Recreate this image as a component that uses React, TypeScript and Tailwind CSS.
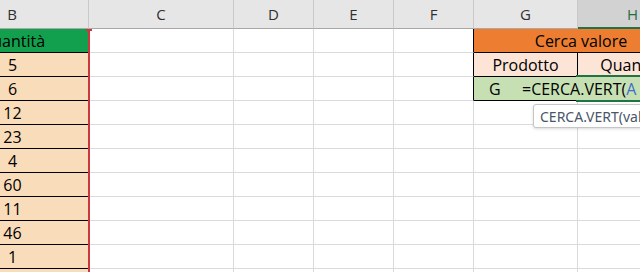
import React from 'react';

const qty = ['5', '6', '12', '23', '4', '60', '11', '46', '1', ''];

// empty grid cell
function Empty({ w }: { w: string }) {
  return <div className={`${w} shrink-0 border-r border-b border-[#dadada]`} />;
}

function HeadCell({ w, label, active }: { w: string; label: string; active?: boolean }) {
  return (
    <div
      className={`${w} shrink-0 flex items-center justify-center border-r border-[#c9c9c9] ${
        active
          ? 'bg-[#d2d2d2] text-[#1e6e42] border-b-2 border-b-[#217346]'
          : 'bg-[#e6e6e6] text-[#303030] border-b border-b-[#a8a8a8]'
      }`}
    >
      <span className="text-[15px] leading-none pt-[1px]">{label}</span>
    </div>
  );
}

export default function App() {
  return (
    <div className="relative w-[640px] h-[272px] overflow-hidden bg-white font-['Open_Sans',sans-serif] text-[16px] text-black">
      <div className="-ml-[64px] flex flex-col w-[752px]">
        {/* column headers */}
        <div className="flex h-[29px]">
          <HeadCell w="w-[153px]" label="B" />
          <HeadCell w="w-[145px]" label="C" />
          <HeadCell w="w-[80px]" label="D" />
          <HeadCell w="w-[80px]" label="E" />
          <HeadCell w="w-[80px]" label="F" />
          <HeadCell w="w-[104px]" label="G" />
          <HeadCell w="w-[110px]" label="H" active />
        </div>

        {/* row 1 */}
        <div className="flex h-[24px]">
          <div className="w-[153px] shrink-0 bg-[#12a04e] border-b border-black flex items-center justify-center">
            <span>Quantità</span>
          </div>
          <Empty w="w-[145px]" />
          <Empty w="w-[80px]" />
          <Empty w="w-[80px]" />
          <div className="w-[80px] shrink-0 border-r border-black border-b border-b-[#dadada]" />
          <div className="w-[214px] shrink-0 bg-[#ed7d31] border-b border-black flex items-center justify-center">
            <span>Cerca valore</span>
          </div>
        </div>

        {/* row 2 */}
        <div className="flex h-[24px]">
          <div className="w-[153px] shrink-0 bg-[#f9dcb9] border-b border-black flex items-center justify-center">
            <span>{qty[0]}</span>
          </div>
          <Empty w="w-[145px]" />
          <Empty w="w-[80px]" />
          <Empty w="w-[80px]" />
          <div className="w-[80px] shrink-0 border-r border-black border-b border-b-[#dadada]" />
          <div className="w-[104px] shrink-0 bg-[#fce4d6] border-r border-b border-black flex items-center justify-center">
            <span>Prodotto</span>
          </div>
          <div className="w-[110px] shrink-0 bg-[#fce4d6] border-b border-black flex items-center justify-center">
            <span>Quantità</span>
          </div>
        </div>

        {/* row 3 */}
        <div className="flex h-[24px]">
          <div className="w-[153px] shrink-0 bg-[#f9dcb9] border-b border-black flex items-center justify-center">
            <span>{qty[1]}</span>
          </div>
          <Empty w="w-[145px]" />
          <Empty w="w-[80px]" />
          <Empty w="w-[80px]" />
          <div className="w-[80px] shrink-0 border-r border-black border-b border-b-[#dadada]" />
          <div className="relative w-[214px] shrink-0 bg-[#c6e0b4] border-b border-black flex items-center">
            <span className="pl-[15px]">G</span>
          </div>
        </div>

        {/* remaining rows */}
        {qty.slice(2).map((q, i) => (
          <div key={i} className="flex h-[24px]">
            <div className="w-[153px] shrink-0 bg-[#f9dcb9] border-b border-black flex items-center justify-center">
              <span>{q}</span>
            </div>
            <Empty w="w-[145px]" />
            <Empty w="w-[80px]" />
            <Empty w="w-[80px]" />
            <Empty w="w-[80px]" />
            <Empty w="w-[104px]" />
            <Empty w="w-[110px]" />
          </div>
        ))}
      </div>

      {/* selected cell H3, being edited */}
      <div className="absolute left-[576px] top-[75px] w-[80px] h-[27px] border-t-2 border-b-2 border-[#217346]" />
      <div className="absolute left-[522px] top-[77px] h-[23px] flex items-center whitespace-nowrap">
        =CERCA.VERT(<span className="text-[#3f6fc6]">A</span>
      </div>

      {/* red column marker */}
      <div className="absolute left-[86px] top-[29px] w-[6px] h-[2px] bg-[#c8383e]" />
      <div className="absolute left-[88px] top-[29px] bottom-0 w-[2px] bg-[#c8383e]" />

      {/* function tooltip */}
      <div className="absolute left-[533px] top-[104px] h-[24px] pl-[6px] pr-[20px] flex items-center bg-white border border-[#c6c6c6] rounded-[3px] shadow-[0_1px_3px_rgba(0,0,0,0.15)] font-['Noto_Sans',sans-serif] text-[14px] text-[#4a5668] whitespace-nowrap">
        CERCA.VERT(valore; matrice_tabella
      </div>
    </div>
  );
}
